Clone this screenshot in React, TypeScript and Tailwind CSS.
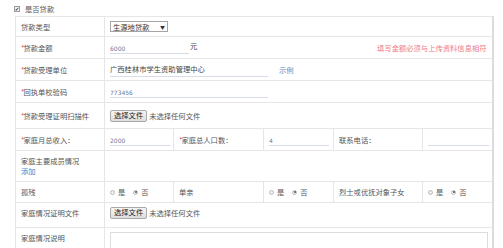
const font = "font-['Noto_Sans_CJK_SC','Liberation_Sans',sans-serif]";

function Req() {
  return <span className="text-[#e5424d] -mr-[1px]">*</span>;
}

function Line({ w, children }: { w: string; children?: React.ReactNode }) {
  return (
    <div className={`${w} h-[13px] border-b border-[#d6dcea] flex items-end pb-[1px] text-[6px] text-[#6b7a99] font-['DejaVu_Sans',sans-serif] leading-none`}>
      {children}
    </div>
  );
}

function FileBtn() {
  return (
    <div className="flex items-center gap-[2px]">
      <div className="h-[12px] px-[3px] flex items-center border border-[#a9a9a9] rounded-[2px] bg-gradient-to-b from-[#f6f6f6] to-[#dedede] text-[#222] leading-none">
        选择文件
      </div>
      <span className="text-[#555]">未选择任何文件</span>
    </div>
  );
}

function Radio({ on }: { on?: boolean }) {
  return (
    <span className="inline-flex items-center justify-center w-[5px] h-[5px] rounded-full border border-[#bcbcbc] bg-[#eee]">
      {on && <span className="w-[2px] h-[2px] rounded-full bg-[#555]" />}
    </span>
  );
}

function YesNo() {
  return (
    <div className="flex items-center gap-[3px] text-[#555]">
      <Radio />
      <span>是</span>
      <span className="w-[2px]" />
      <Radio on />
      <span>否</span>
    </div>
  );
}

const td = "border border-[#e6e6e6] px-[5px] align-middle";

export default function App() {
  return (
    <div className={`w-[503px] h-[248px] overflow-hidden bg-white text-[7.3px] text-[#555] leading-[10px] ${font}`}>
      <div className="flex items-center gap-[5px] pl-[14px] pt-[4px] h-[13px]">
        <span className="w-[6px] h-[6px] border border-[#999] bg-[#f4f4f4] flex items-center justify-center text-[5px] leading-none text-[#333]">✔</span>
        <span>是否贷款</span>
      </div>
      <table className="ml-[15px] mt-[3px] table-fixed border-collapse w-[477px] border-r-2 border-r-[#dcdcdc]">
        <colgroup>
          <col className="w-[89px]" />
          <col className="w-[69px]" />
          <col className="w-[90px]" />
          <col className="w-[70px]" />
          <col className="w-[89px]" />
          <col className="w-[70px]" />
        </colgroup>
        <tbody>
          <tr className="h-[20px]">
            <td className={td}>贷款类型</td>
            <td className={td} colSpan={5}>
              <div className="w-[58px] h-[11px] border border-[#a5a5a5] flex items-center justify-between px-[2px] text-[#333]">
                <span>生源地贷款</span>
                <span className="text-[5px] leading-none">▼</span>
              </div>
            </td>
          </tr>
          <tr className="h-[22px]">
            <td className={td}><Req />贷款金额</td>
            <td className={td} colSpan={5}>
              <div className="flex items-center justify-between">
                <div className="flex items-end gap-[1px]">
                  <Line w="w-[79px]">6000</Line>
                  <span className="text-[#444] mb-[3px]">元</span>
                </div>
                <span className="text-[#ef7a84]">填写金额必须与上传资料信息相符</span>
              </div>
            </td>
          </tr>
          <tr className="h-[22px]">
            <td className={td}><Req />贷款受理单位</td>
            <td className={td} colSpan={5}>
              <div className="flex items-center gap-[11px]">
                <div className="w-[158px] h-[14px] border-b border-[#d6dcea] text-[#444] flex items-center">广西桂林市学生资助管理中心</div>
                <span className="text-[#5a8cc6]">示例</span>
              </div>
            </td>
          </tr>
          <tr className="h-[22px]">
            <td className={td}><Req />回执单校验码</td>
            <td className={td} colSpan={5}>
              <Line w="w-[158px]">773456</Line>
            </td>
          </tr>
          <tr className="h-[26px]">
            <td className={td}><Req />贷款受理证明扫描件</td>
            <td className={td} colSpan={5}><FileBtn /></td>
          </tr>
          <tr className="h-[22px]">
            <td className={td}><Req />家庭月总收入：</td>
            <td className={td}><Line w="w-[60px]">2000</Line></td>
            <td className={td}><Req />家庭总人口数：</td>
            <td className={td}><Line w="w-[60px]">4</Line></td>
            <td className={td}>联系电话：</td>
            <td className={td}><Line w="w-[61px]" /></td>
          </tr>
          <tr className="h-[31px]">
            <td className={td}>
              <div>家庭主要成员情况</div>
              <div className="text-[#3f83c9]">添加</div>
            </td>
            <td className={td} colSpan={5}></td>
          </tr>
          <tr className="h-[21px]">
            <td className={td}>孤残</td>
            <td className={td}><YesNo /></td>
            <td className={td}>单亲</td>
            <td className={td}><YesNo /></td>
            <td className={td}>烈士或优抚对象子女</td>
            <td className={td}><YesNo /></td>
          </tr>
          <tr className="h-[25px]">
            <td className={`${td} align-top pt-[5px]`}>家庭情况证明文件</td>
            <td className={`${td} align-top pt-[4px]`} colSpan={5}><FileBtn /></td>
          </tr>
          <tr className="h-[30px]">
            <td className={`${td} align-top pt-[5px]`}>家庭情况说明</td>
            <td className={`${td} align-top pt-[4px]`} colSpan={5}>
              <div className="w-[378px] h-[30px] border border-[#dcdcdc]" />
            </td>
          </tr>
        </tbody>
      </table>
    </div>
  );
}
